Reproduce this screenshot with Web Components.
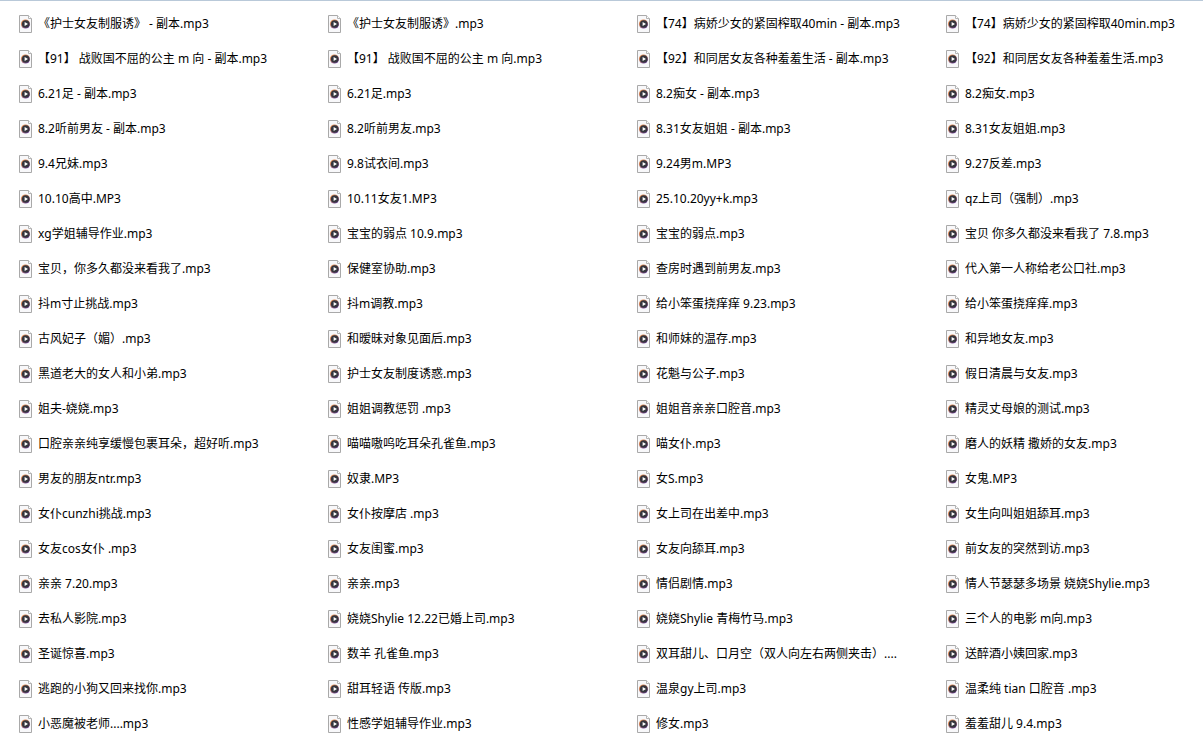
<!DOCTYPE html>
<html lang="zh-CN">
<head>
<meta charset="utf-8">
<meta name="viewport" content="width=device-width, initial-scale=1">
<title>文件列表</title>
<style>
    body {
        margin: 0;
        background: #fff;
        color: #000;
        font: 12px/20px "Noto Sans", "Noto Sans CJK SC", sans-serif;
    }
</style>
</head>
<body>

<file-list>
    <file-item>《护士女友制服诱》 - 副本.mp3</file-item>
    <file-item>《护士女友制服诱》.mp3</file-item>
    <file-item>【74】病娇少女的紧固榨取40min - 副本.mp3</file-item>
    <file-item>【74】病娇少女的紧固榨取40min.mp3</file-item>

    <file-item>【91】 战败国不屈的公主 m 向 - 副本.mp3</file-item>
    <file-item>【91】 战败国不屈的公主 m 向.mp3</file-item>
    <file-item>【92】和同居女友各种羞羞生活 - 副本.mp3</file-item>
    <file-item>【92】和同居女友各种羞羞生活.mp3</file-item>

    <file-item>6.21足 - 副本.mp3</file-item>
    <file-item>6.21足.mp3</file-item>
    <file-item>8.2痴女 - 副本.mp3</file-item>
    <file-item>8.2痴女.mp3</file-item>

    <file-item>8.2听前男友 - 副本.mp3</file-item>
    <file-item>8.2听前男友.mp3</file-item>
    <file-item>8.31女友姐姐 - 副本.mp3</file-item>
    <file-item>8.31女友姐姐.mp3</file-item>

    <file-item>9.4兄妹.mp3</file-item>
    <file-item>9.8试衣间.mp3</file-item>
    <file-item>9.24男m.MP3</file-item>
    <file-item>9.27反差.mp3</file-item>

    <file-item>10.10高中.MP3</file-item>
    <file-item>10.11女友1.MP3</file-item>
    <file-item>25.10.20yy+k.mp3</file-item>
    <file-item>qz上司（强制）.mp3</file-item>

    <file-item>xg学姐辅导作业.mp3</file-item>
    <file-item>宝宝的弱点 10.9.mp3</file-item>
    <file-item>宝宝的弱点.mp3</file-item>
    <file-item>宝贝 你多久都没来看我了 7.8.mp3</file-item>

    <file-item>宝贝，你多久都没来看我了.mp3</file-item>
    <file-item>保健室协助.mp3</file-item>
    <file-item>查房时遇到前男友.mp3</file-item>
    <file-item>代入第一人称给老公口社.mp3</file-item>

    <file-item>抖m寸止挑战.mp3</file-item>
    <file-item>抖m调教.mp3</file-item>
    <file-item>给小笨蛋挠痒痒 9.23.mp3</file-item>
    <file-item>给小笨蛋挠痒痒.mp3</file-item>

    <file-item>古风妃子（媚）.mp3</file-item>
    <file-item>和暧昧对象见面后.mp3</file-item>
    <file-item>和师妹的温存.mp3</file-item>
    <file-item>和异地女友.mp3</file-item>

    <file-item>黑道老大的女人和小弟.mp3</file-item>
    <file-item>护士女友制度诱惑.mp3</file-item>
    <file-item>花魁与公子.mp3</file-item>
    <file-item>假日清晨与女友.mp3</file-item>

    <file-item>姐夫-娆娆.mp3</file-item>
    <file-item>姐姐调教惩罚 .mp3</file-item>
    <file-item>姐姐音亲亲口腔音.mp3</file-item>
    <file-item>精灵丈母娘的测试.mp3</file-item>

    <file-item>口腔亲亲纯享缓慢包裹耳朵，超好听.mp3</file-item>
    <file-item>喵喵嗷呜吃耳朵孔雀鱼.mp3</file-item>
    <file-item>喵女仆.mp3</file-item>
    <file-item>磨人的妖精 撒娇的女友.mp3</file-item>

    <file-item>男友的朋友ntr.mp3</file-item>
    <file-item>奴隶.MP3</file-item>
    <file-item>女S.mp3</file-item>
    <file-item>女鬼.MP3</file-item>

    <file-item>女仆cunzhi挑战.mp3</file-item>
    <file-item>女仆按摩店 .mp3</file-item>
    <file-item>女上司在出差中.mp3</file-item>
    <file-item>女生向叫姐姐舔耳.mp3</file-item>

    <file-item>女友cos女仆 .mp3</file-item>
    <file-item>女友闺蜜.mp3</file-item>
    <file-item>女友向舔耳.mp3</file-item>
    <file-item>前女友的突然到访.mp3</file-item>

    <file-item>亲亲 7.20.mp3</file-item>
    <file-item>亲亲.mp3</file-item>
    <file-item>情侣剧情.mp3</file-item>
    <file-item>情人节瑟瑟多场景 娆娆Shylie.mp3</file-item>

    <file-item>去私人影院.mp3</file-item>
    <file-item>娆娆Shylie 12.22已婚上司.mp3</file-item>
    <file-item>娆娆Shylie 青梅竹马.mp3</file-item>
    <file-item>三个人的电影 m向.mp3</file-item>

    <file-item>圣诞惊喜.mp3</file-item>
    <file-item>数羊 孔雀鱼.mp3</file-item>
    <file-item>双耳甜儿、口月空（双人向左右两侧夹击）....</file-item>
    <file-item>送醉酒小姨回家.mp3</file-item>

    <file-item>逃跑的小狗又回来找你.mp3</file-item>
    <file-item>甜耳轻语 传版.mp3</file-item>
    <file-item>温泉gy上司.mp3</file-item>
    <file-item>温柔纯 tian 口腔音 .mp3</file-item>

    <file-item>小恶魔被老师....mp3</file-item>
    <file-item>性感学姐辅导作业.mp3</file-item>
    <file-item>修女.mp3</file-item>
    <file-item>羞羞甜儿 9.4.mp3</file-item>
</file-list>

<template id="fileListTpl">
    <style>
        :host {
            display: grid;
            grid-template-columns: repeat(4, minmax(0, 1fr));
            gap: 15px 52px;
            padding: 13px 0 0 19px;
            border-top: 1px solid #b9c9d9;
        }
    </style>
    <slot></slot>
</template>

<template id="fileItemTpl">
    <style>
        :host {
            display: flex;
            align-items: center;
            gap: 5px;
            height: 20px;
            white-space: nowrap;
            cursor: default;
        }
        audio-icon { flex: none; }
    </style>
    <audio-icon></audio-icon>
    <span><slot></slot></span>
</template>

<template id="audioIconTpl">
    <style>
        :host { display: block; width: 14px; height: 18px; }
        svg { display: block; }
    </style>
    <svg width="14" height="18" viewBox="0 0 14 18" aria-hidden="true">
        <defs>
            <linearGradient id="ring" x1="0" y1="0" x2="0.6" y2="1">
                <stop offset="0" stop-color="#f08a3c"/>
                <stop offset="0.5" stop-color="#c98468"/>
                <stop offset="1" stop-color="#70409c"/>
            </linearGradient>
        </defs>
        <path d="M0.5 0.5H9.5L12.5 3.5V17.5H0.5Z" fill="#f8f8fa" stroke="#a9a9a9"/>
        <path d="M9.5 0.5V3.5H12.5" fill="#fff" stroke="#b5b5b5"/>
        <circle cx="6.5" cy="9" r="4.6" fill="url(#ring)"/>
        <circle cx="6.7" cy="9" r="3.8" fill="#35353d"/>
        <path d="M5.6 6.9L9 9L5.6 11.1Z" fill="#fff"/>
    </svg>
</template>

<script>
class AudioIcon extends HTMLElement {
    constructor() {
        super();
        this.attachShadow({mode: 'open'});
        this.shadowRoot.appendChild(document.querySelector('#audioIconTpl').content.cloneNode(true));
    }
}

class FileItem extends HTMLElement {
    constructor() {
        super();
        this.attachShadow({mode: 'open'});
        this.shadowRoot.appendChild(document.querySelector('#fileItemTpl').content.cloneNode(true));
    }

    connectedCallback() {
        this.setAttribute('role', 'listitem');
    }
}

class FileList extends HTMLElement {
    constructor() {
        super();
        this.attachShadow({mode: 'open'});
        this.shadowRoot.appendChild(document.querySelector('#fileListTpl').content.cloneNode(true));
    }

    connectedCallback() {
        this.setAttribute('role', 'list');
    }
}

customElements.define('audio-icon', AudioIcon);
customElements.define('file-item', FileItem);
customElements.define('file-list', FileList);
</script>
</body>
</html>
